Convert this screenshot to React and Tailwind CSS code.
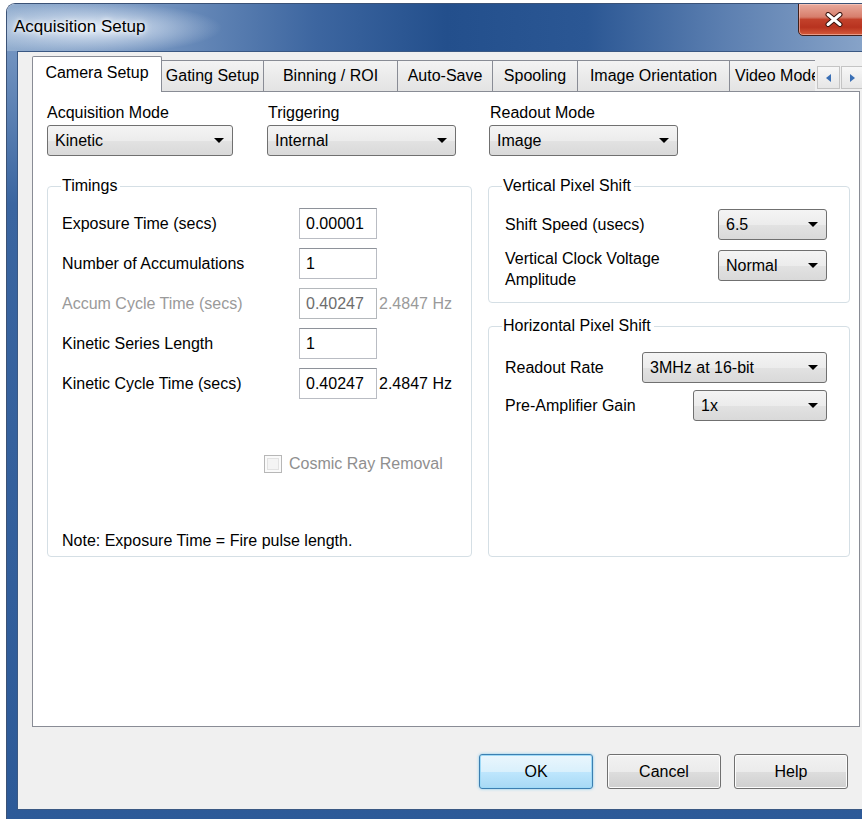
import React from 'react'

const TABS = [
  { label: 'Gating Setup', w: 'w-[102px]' },
  { label: 'Binning / ROI', w: 'w-[134px]' },
  { label: 'Auto-Save', w: 'w-[95px]' },
  { label: 'Spooling', w: 'w-[85px]' },
  { label: 'Image Orientation', w: 'w-[152px]' },
]

const TIMINGS = [
  { label: 'Exposure Time (secs)', value: '0.00001' },
  { label: 'Number of Accumulations', value: '1' },
  { label: 'Accum Cycle Time (secs)', value: '0.40247', hz: '2.4847 Hz', disabled: true },
  { label: 'Kinetic Series Length', value: '1' },
  { label: 'Kinetic Cycle Time (secs)', value: '0.40247', hz: '2.4847 Hz' },
]

function Caret() {
  return (
    <svg width="10" height="5" viewBox="0 0 10 5" className="shrink-0">
      <path d="M0 0h10L5 5z" fill="#000" />
    </svg>
  )
}

// Win7 style combo box
function Combo({ value, className = '' }) {
  return (
    <div
      className={`flex items-center h-[31px] pl-[7px] pr-[8px] rounded-[3px] border border-[#707070] bg-[linear-gradient(#f4f4f4_0%,#ececec_50%,#e2e2e2_52%,#d9d9d9_100%)] ${className}`}
    >
      <span className="flex-1 leading-[18px] whitespace-nowrap">{value}</span>
      <Caret />
    </div>
  )
}

function TextBox({ value, disabled }) {
  return (
    <div
      className={`w-[78px] h-[31px] flex items-center pl-[6px] bg-white border leading-[18px] ${
        disabled ? 'border-[#b4b8bc] text-[#6d6d6d]' : 'border-[#b9bcc3] border-t-[#8e929a]'
      }`}
    >
      {value}
    </div>
  )
}

function Group({ title, className = '', children }) {
  return (
    <fieldset className={`border border-[#d5dfe5] rounded-[4px] ${className}`}>
      <legend className="ml-[13px] pl-[1px] pr-[3px] leading-[18px]">{title}</legend>
      {children}
    </fieldset>
  )
}

function Button({ children, focused }) {
  return (
    <button
      className={`w-[114px] h-[35px] rounded-[3px] border leading-[18px] ${
        focused
          ? 'border-[#3c7fb1] bg-[linear-gradient(#eaf6fd_0%,#d9f0fc_50%,#bee6fd_52%,#a7d9f5_100%)] shadow-[inset_0_0_0_1px_#9fdaf7,0_0_3px_#7ec8ef]'
          : 'border-[#707070] bg-[linear-gradient(#f2f2f2_0%,#ebebeb_50%,#dddddd_52%,#cfcfcf_100%)] shadow-[inset_0_0_0_1px_#fcfcfc]'
      }`}
    >
      {children}
    </button>
  )
}

function ScrollArrow({ dir }) {
  return (
    <div className="w-[23px] h-[23px] flex items-center justify-center border border-[#c4c4c4] bg-[linear-gradient(#f7f7f7,#e6e6e6)]">
      <svg width="5" height="8" viewBox="0 0 5 8">
        <path d={dir === 'left' ? 'M5 0v8L0 4z' : 'M0 0v8l5-4z'} fill="#3a6fb5" />
      </svg>
    </div>
  )
}

export default function App() {
  return (
    <div className="w-[862px] h-[819px] bg-white overflow-hidden font-['Liberation_Sans',Arial,sans-serif] text-[16px] text-black">
      <div className="ml-[6px] mt-[3px] w-[880px] h-[816px] flex flex-col rounded-tl-[9px] overflow-hidden border-l border-t border-[#3b5276]">
        {/* caption */}
        <div className="h-[47px] shrink-0 flex items-start bg-[radial-gradient(ellipse_130px_26px_at_85px_24px,rgba(232,240,250,0.95),rgba(232,240,250,0)),linear-gradient(90deg,#93aecf_0%,#6f90bd_18%,#3d66a0_35%,#234f8c_50%,#2b5794_66%,#5d80b1_82%,#8ea9cc_100%)]">
          <span className="ml-[7px] mt-[13px] text-[17px] leading-[20px] [text-shadow:0_0_8px_#fff,0_0_4px_#fff]">
            Acquisition Setup
          </span>
          <div className="ml-auto mr-[17px] -mt-[1px] w-[71px] h-[33px] flex items-center justify-center rounded-b-[5px] border border-[#40201c] bg-[linear-gradient(#e9aa9c_0%,#d77e6c_42%,#c2412b_50%,#b8331f_75%,#d55b3c_100%)] shadow-[inset_0_0_0_1px_rgba(255,220,210,0.5)]">
            <svg width="18" height="15" viewBox="0 0 18 15">
              <path d="M3 2.5l12 10M15 2.5l-12 10" stroke="#3a1510" strokeWidth="5" strokeLinecap="round" />
              <path d="M3 2.5l12 10M15 2.5l-12 10" stroke="#fff" strokeWidth="3" strokeLinecap="round" />
            </svg>
          </div>
        </div>

        {/* frame + client area */}
        <div className="flex-1 pl-[10px] pb-[9px] bg-[linear-gradient(180deg,#7293c0_0%,#3a65a0_20%,#2d5a98_100%)] flex">
          <div className="flex-1 bg-[#f0f0f0] border-l border-t border-b border-[#3a5883] pl-[14px] flex flex-col">
            {/* tab strip */}
            <div className="mt-[4px] h-[35px] flex items-end">
              <div className="relative z-10 -mb-[1px] w-[130px] h-[36px] flex items-center justify-center bg-white border-l border-t border-r border-[#898c95] rounded-t-[2px] leading-[18px] pb-[3px]">
                Camera Setup
              </div>
              {TABS.map((t) => (
                <div
                  key={t.label}
                  className={`${t.w} h-[31px] flex items-center justify-center whitespace-nowrap border-t border-r border-[#898c95] bg-[linear-gradient(#f3f3f3,#e3e3e3)] leading-[18px]`}
                >
                  {t.label}
                </div>
              ))}
              <div className="w-[85px] h-[31px] flex items-center pl-[5px] overflow-hidden whitespace-nowrap border-t border-[#898c95] bg-[linear-gradient(#f3f3f3,#e3e3e3)] leading-[18px]">
                Video Mode
              </div>
              <div className="ml-[2px] mb-[2px] flex gap-[1px] self-end">
                <ScrollArrow dir="left" />
                <ScrollArrow dir="right" />
              </div>
            </div>

            {/* tab page */}
            <div className="w-[828px] h-[636px] bg-white border border-[#898c95] pl-[14px] pt-[12px]">
              <div className="flex">
                <div className="w-[186px]">
                  <div className="leading-[18px]">Acquisition Mode</div>
                  <Combo value="Kinetic" className="mt-[3px]" />
                </div>
                <div className="ml-[34px] w-[189px]">
                  <div className="leading-[18px] pl-[1px]">Triggering</div>
                  <Combo value="Internal" className="mt-[3px]" />
                </div>
                <div className="ml-[33px] w-[189px]">
                  <div className="leading-[18px] pl-[1px]">Readout Mode</div>
                  <Combo value="Image" className="mt-[3px]" />
                </div>
              </div>

              <div className="mt-[21px] flex items-start">
                <Group title="Timings" className="w-[425px] h-[380px]">
                  <div className="pt-[13px] flex flex-col gap-[9px]">
                    {TIMINGS.map((r) => (
                      <div key={r.label} className="flex items-center h-[31px]">
                        <span className={`w-[251px] pl-[14px] leading-[18px] ${r.disabled ? 'text-[#9a9a9a]' : ''}`}>
                          {r.label}
                        </span>
                        <TextBox value={r.value} disabled={r.disabled} />
                        {r.hz && (
                          <span className={`ml-[2px] leading-[18px] ${r.disabled ? 'text-[#9a9a9a]' : ''}`}>{r.hz}</span>
                        )}
                      </div>
                    ))}
                  </div>
                  <div className="mt-[56px] pl-[216px] flex items-center h-[18px]">
                    <span className="w-[18px] h-[18px] border border-[#b7b7b7] bg-[#f4f4f4] shadow-[inset_0_0_0_2px_#fafafa,inset_0_0_0_3px_#e2e2e2]" />
                    <span className="ml-[7px] leading-[18px] text-[#8f8f8f]">Cosmic Ray Removal</span>
                  </div>
                  <div className="mt-[59px] pl-[14px] leading-[18px]">Note: Exposure Time = Fire pulse length.</div>
                </Group>

                <div className="ml-[16px] w-[362px] flex flex-col">
                  <Group title="Vertical Pixel Shift" className="h-[126px]">
                    <div className="pt-[14px]">
                      <div className="flex items-center">
                        <span className="w-[229px] pl-[16px] leading-[18px]">Shift Speed (usecs)</span>
                        <Combo value="6.5" className="w-[109px]" />
                      </div>
                      <div className="mt-[10px] flex items-start">
                        <span className="w-[229px] pl-[16px] -mt-[2px] leading-[21px]">
                          Vertical Clock Voltage
                          <br />
                          Amplitude
                        </span>
                        <Combo value="Normal" className="w-[109px]" />
                      </div>
                    </div>
                  </Group>

                  <Group title="Horizontal Pixel Shift" className="mt-[14px] h-[240px]">
                    <div className="pt-[17px]">
                      <div className="flex items-center">
                        <span className="w-[153px] pl-[16px] leading-[18px]">Readout Rate</span>
                        <Combo value="3MHz at 16-bit" className="w-[185px]" />
                      </div>
                      <div className="mt-[7px] flex items-center">
                        <span className="w-[204px] pl-[16px] leading-[18px]">Pre-Amplifier Gain</span>
                        <Combo value="1x" className="w-[134px]" />
                      </div>
                    </div>
                  </Group>
                </div>
              </div>
            </div>

            {/* dialog buttons */}
            <div className="w-[828px] mt-[27px] pr-[12px] flex justify-end">
              <Button focused>OK</Button>
              <div className="ml-[14px]">
                <Button>Cancel</Button>
              </div>
              <div className="ml-[13px]">
                <Button>Help</Button>
              </div>
            </div>
          </div>
        </div>
      </div>
    </div>
  )
}
